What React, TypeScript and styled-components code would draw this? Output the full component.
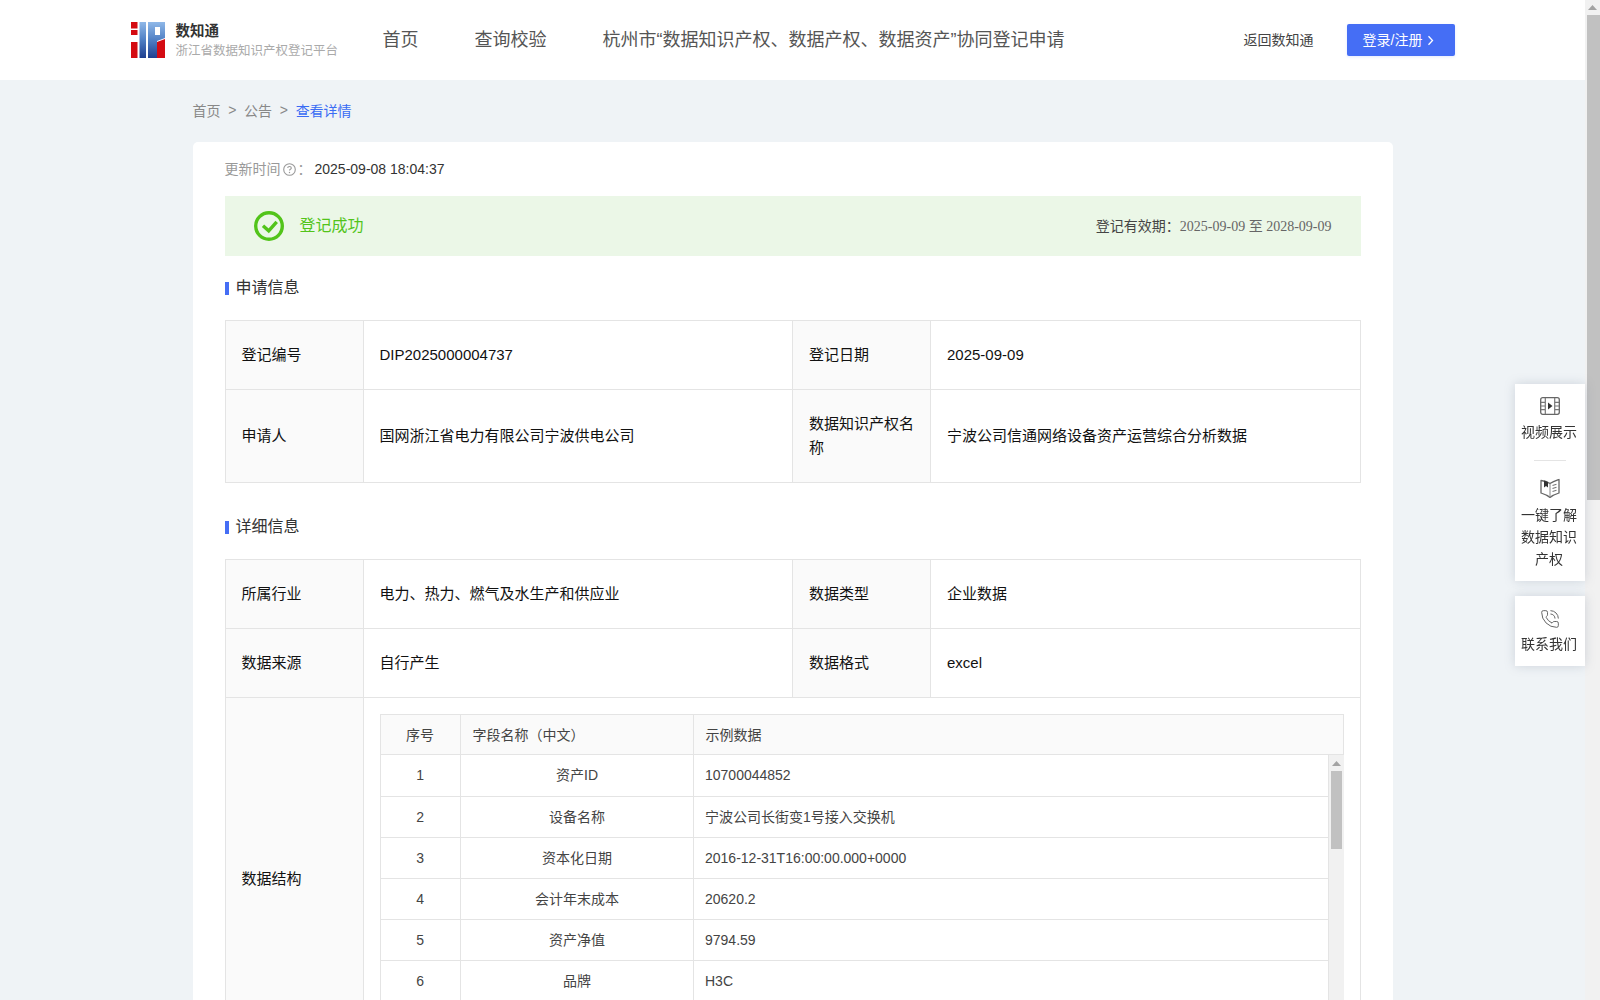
import styled, { createGlobalStyle } from "styled-components";
import { PhoneCall } from "lucide-react";

const GlobalStyle = createGlobalStyle`
  * {
    box-sizing: border-box;
  }
  html, body {
    margin: 0;
    padding: 0;
    height: 100%;
    overflow: hidden;
  }
  body {
    font-family: "Liberation Sans", "Noto Sans CJK SC", sans-serif;
    font-size: 14px;
    color: #333;
    background: #eff3f6;
  }
`;

//=============================== Page =========================================
const Viewport = styled.div`
  height: 100vh;
  display: flex;
  background: #eff3f6;
`;

const Page = styled.div`
  flex: 1;
  min-width: 0;
  overflow: hidden;
`;

//=============================== Scrollbar =========================================
const Track = styled.div`
  width: 15px;
  flex: none;
  background: #f1f1f1;
`;

const TrackButton = styled.div<{ $h: number }>`
  height: ${(p) => p.$h}px;
  display: flex;
  align-items: center;
  justify-content: center;
  svg {
    display: block;
  }
`;

const Thumb = styled.div<{ $h: number; $right: number }>`
  height: ${(p) => p.$h}px;
  margin-left: 2px;
  margin-right: ${(p) => p.$right}px;
  background: #c1c1c1;
`;

function ScrollBar({ thumb, right, button }: { thumb: number; right: number; button: number }) {
  return (
    <Track>
      <TrackButton $h={button}>
        <svg width="9" height="5" viewBox="0 0 9 5">
          <path d="M4.500 0L9 5H0z" fill="#a3a3a3" />
        </svg>
      </TrackButton>
      <Thumb $h={thumb} $right={right} />
    </Track>
  );
}

//=============================== Header =========================================
const Header = styled.header`
  height: 80px;
  background: #fff;
`;

const HeaderInner = styled.div`
  width: 1324px;
  height: 100%;
  margin: 0 auto;
  display: flex;
  align-items: center;
`;

const LogoBox = styled.div`
  display: flex;
  align-items: center;
  width: 252px;
`;

const LogoText = styled.div`
  margin-left: 11px;
  display: flex;
  flex-direction: column;
`;

const LogoTitle = styled.div`
  font-size: 14.5px;
  font-weight: 700;
  line-height: 20px;
  color: #333;
`;

const LogoSub = styled.div`
  font-size: 12.5px;
  line-height: 18px;
  margin-top: 1px;
  color: #aaa;
  white-space: nowrap;
`;

const Nav = styled.nav`
  display: flex;
  gap: 56px;
  flex: 1;
`;

const NavItem = styled.a`
  font-size: 18px;
  color: #555;
  margin-top: -4px;
  white-space: nowrap;
`;

const BackLink = styled.a`
  font-size: 14px;
  color: #444;
  margin-right: 33px;
  padding-bottom: 3px;
`;

const LoginButton = styled.button`
  width: 108px;
  height: 32px;
  padding: 0 4px 3px 0;
  border: none;
  border-radius: 2px;
  background: #456ef5;
  color: #fff;
  font: inherit;
  font-size: 14px;
  display: flex;
  align-items: center;
  justify-content: center;
  gap: 5px;
  box-shadow: 0 1px 3px rgba(69, 110, 245, 0.15);
  svg {
    display: block;
    margin-top: 3px;
  }
`;

//=============================== Content =========================================
const Main = styled.main`
  width: 1200px;
  margin: 0 auto;
`;

const Crumbs = styled.div`
  display: flex;
  align-items: center;
  height: 20px;
  margin-top: 20px;
  margin-bottom: 22px;
  font-size: 14px;
  color: #888;
`;

const CrumbSep = styled.span`
  margin: 0 7.7px;
`;

const CrumbActive = styled.span`
  color: #3a6cf4;
`;

const Card = styled.section`
  background: #fff;
  border-radius: 5px;
  padding: 16px 32px 32px;
`;

const Meta = styled.div`
  display: flex;
  align-items: center;
  height: 22px;
  margin-bottom: 16px;
  color: #999;
  svg {
    margin: 0 2px;
  }
`;

const MetaLabel = styled.span`
  padding-bottom: 3px;
`;

const MetaValue = styled.span`
  color: #333;
  margin-left: 3px;
`;

const Status = styled.div`
  display: flex;
  align-items: center;
  height: 60px;
  padding: 0 29px;
  background: #ebf7e7;
`;

const StatusText = styled.span`
  margin-left: 16px;
  padding-bottom: 4px;
  font-size: 16px;
  color: #52c41a;
  flex: 1;
`;

const Validity = styled.span`
  padding-bottom: 3px;
  font-size: 14px;
  color: #444;
`;

const ValidityDate = styled.span`
  font-family: "Liberation Serif", "Noto Sans CJK SC", serif;
  color: #666;
`;

const SectionTitle = styled.h3<{ $top: number; $bottom: number }>`
  display: flex;
  align-items: center;
  height: 24px;
  margin: ${(p) => p.$top}px 0 ${(p) => p.$bottom}px;
  font-size: 16px;
  font-weight: 400;
  line-height: 24px;
  color: #333;
  &::before {
    content: "";
    width: 4px;
    height: 13px;
    margin: 1px 7px 0 0;
    background: #456ef5;
  }
`;

const InfoTable = styled.table`
  width: 1135px;
  border-collapse: collapse;
  table-layout: fixed;
  font-size: 15px;
  color: #111;
`;

const LabelCell = styled.th`
  width: 138px;
  padding: 0 16px;
  background: #fafafa;
  border: 1px solid #e4e4e4;
  font-weight: 400;
  text-align: left;
  line-height: 24px;
`;

const ValueCell = styled.td`
  width: 429.5px;
  padding: 0 16px;
  border: 1px solid #e4e4e4;
  line-height: 24px;
`;

const NestedCell = styled(ValueCell)`
  padding: 16px;
`;

const Row = styled.tr<{ $h: number }>`
  height: ${(p) => p.$h}px;
`;

//=============================== Field table =========================================
const FieldHeadTable = styled.table`
  width: 100%;
  border-collapse: collapse;
  table-layout: fixed;
  font-size: 14px;
  color: #444;
`;

const FieldHead = styled.th<{ $w?: number; $center?: boolean }>`
  ${(p) => (p.$w ? `width: ${p.$w}px;` : "")}
  height: 40px;
  padding: 0 12px;
  background: #fafafa;
  border: 1px solid #e4e4e4;
  font-weight: 400;
  text-align: ${(p) => (p.$center ? "center" : "left")};
`;

const FieldBody = styled.div`
  height: 289px;
  display: flex;
  overflow: hidden;
  border-left: 1px solid #e4e4e4;
`;

const FieldRows = styled.div`
  flex: 1;
  min-width: 0;
  border-right: 1px solid #e4e4e4;
`;

const FieldBodyTable = styled.table`
  width: 100%;
  border-collapse: collapse;
  table-layout: fixed;
  font-size: 14px;
  color: #444;
`;

const FieldCell = styled.td<{ $w?: number; $center?: boolean }>`
  ${(p) => (p.$w ? `width: ${p.$w}px;` : "")}
  height: 41px;
  padding: 0 12px;
  border-bottom: 1px solid #e4e4e4;
  border-right: 1px solid #e4e4e4;
  text-align: ${(p) => (p.$center ? "center" : "left")};
  &:last-child {
    padding-left: 11px;
    border-right: none;
  }
`;

//=============================== Side tools =========================================
const SideTools = styled.aside`
  position: fixed;
  top: 384px;
  right: 15px;
  width: 70px;
  display: flex;
  flex-direction: column;
  gap: 15px;
`;

const SidePanel = styled.div<{ $bottom: number; $iconGap: number }>`
  background: #fff;
  padding: 13px 8px ${(p) => p.$bottom}px 6px;
  box-shadow: 0 0 10px rgba(120, 130, 150, 0.28);
  display: flex;
  flex-direction: column;
  align-items: center;
  text-align: center;
  font-size: 14px;
  line-height: 22px;
  color: #333;
  svg {
    display: block;
    margin-left: 2px;
    margin-bottom: ${(p) => p.$iconGap}px;
  }
`;

const SideDivider = styled.div`
  width: 32px;
  height: 1px;
  flex: none;
  margin: 17px 0 17px 2px;
  background: #e4e4e4;
`;

function LogoMark() {
  return (
    <svg width="34" height="36" viewBox="0 0 34 36">
      <defs>
        <linearGradient id="logoBlue" x1="0" y1="0" x2="0" y2="1">
          <stop offset="0" stopColor="#8fb8e8" />
          <stop offset="0.5" stopColor="#4f7fc4" />
          <stop offset="1" stopColor="#1f3f8f" />
        </linearGradient>
      </defs>
      <path d="M0 0h6.500v6.500H0zM0 8h6.500v5H0zM0 20h6.500v16H0z" fill="#d40b12" />
      <path d="M8.500 0h6.500v36H8.500z" fill="url(#logoBlue)" />
      <path
        d="M17 0h17v16l-8 3v17h-9z M24 5v8h5V5z"
        fill="url(#logoBlue)"
        fillRule="evenodd"
      />
      <path d="M26 20l8-3v19h-8z" fill="#d40b12" />
    </svg>
  );
}

function VideoIcon() {
  return (
    <svg width="20" height="18" viewBox="0 0 20 18" fill="none">
      <rect x="0.7" y="0.7" width="18.6" height="16.6" rx="2" stroke="#666" strokeWidth="1.3" />
      <path d="M5.300 1v16M14.700 1v16M1 5.300h4.300M1 9h4.300M1 12.700h4.300M14.700 5.300H19M14.700 9H19M14.700 12.700H19" stroke="#777" strokeWidth="1.2" />
      <path d="M8 5.500L12.500 9 8 12.500z" fill="#333" />
    </svg>
  );
}

function BookIcon() {
  return (
    <svg width="20" height="20" viewBox="0 0 20 20" fill="none">
      <path
        d="M1 2.500c3 .2 6 1 9 3 3-2 5.500-2.800 9-4v13.500c-3.500 1-6.500 2.300-9 4.500-2.500-2.200-5.500-3.500-9-4.500z"
        stroke="#666"
        strokeWidth="1.3"
        strokeLinejoin="round"
      />
      <path d="M10 5.500v13.500" stroke="#888" strokeWidth="1" />
      <path d="M4 2.500v7l2-1.500 2 1.500V4z" fill="#333" />
      <path d="M12.500 7.500l4-1.300M12.500 10.500l4-1.300M12.500 13.500l4-1.300" stroke="#777" strokeWidth="1.100" />
    </svg>
  );
}

function CheckRing() {
  return (
    <svg width="30" height="30" viewBox="0 0 30 30" fill="none">
      <circle cx="15" cy="15" r="13.300" stroke="#52c41a" strokeWidth="3.400" />
      <path d="M9 14.800l5.700 5 8-9" stroke="#52c41a" strokeWidth="3.400" />
    </svg>
  );
}

function HelpIcon() {
  return (
    <svg width="13" height="13" viewBox="0 0 13 13" fill="none">
      <circle cx="6.500" cy="6.500" r="5.800" stroke="#999" strokeWidth="1.100" />
      <path d="M4.700 5.100c0-1 .8-1.600 1.800-1.600s1.800.6 1.800 1.500c0 1.300-1.800 1.300-1.800 2.500" stroke="#999" strokeWidth="1.100" />
      <circle cx="6.500" cy="9.500" r=".7" fill="#999" />
    </svg>
  );
}

const fields = [
  ["1", "资产ID", "10700044852"],
  ["2", "设备名称", "宁波公司长街变1号接入交换机"],
  ["3", "资本化日期", "2016-12-31T16:00:00.000+0000"],
  ["4", "会计年末成本", "20620.2"],
  ["5", "资产净值", "9794.59"],
  ["6", "品牌", "H3C"],
];

function App() {
  return (
    <>
      <GlobalStyle />
      <Viewport>
        <Page>
          <Header>
            <HeaderInner>
              <LogoBox>
                <LogoMark />
                <LogoText>
                  <LogoTitle>数知通</LogoTitle>
                  <LogoSub>浙江省数据知识产权登记平台</LogoSub>
                </LogoText>
              </LogoBox>
              <Nav>
                <NavItem>首页</NavItem>
                <NavItem>查询校验</NavItem>
                <NavItem>杭州市“数据知识产权、数据产权、数据资产”协同登记申请</NavItem>
              </Nav>
              <BackLink>返回数知通</BackLink>
              <LoginButton>
                登录/注册
                <svg width="7" height="11" viewBox="0 0 7 11" fill="none">
                  <path d="M1.500 1.200L5.500 5.500l-4 4.300" stroke="#fff" strokeWidth="1.300" />
                </svg>
              </LoginButton>
            </HeaderInner>
          </Header>

          <Main>
            <Crumbs>
              首页
              <CrumbSep>&gt;</CrumbSep>
              公告
              <CrumbSep>&gt;</CrumbSep>
              <CrumbActive>查看详情</CrumbActive>
            </Crumbs>

            <Card>
              <Meta>
                <MetaLabel>更新时间</MetaLabel>
                <HelpIcon />
                <MetaLabel>：</MetaLabel>
                <MetaValue>2025-09-08 18:04:37</MetaValue>
              </Meta>

              <Status>
                <CheckRing />
                <StatusText>登记成功</StatusText>
                <Validity>
                  登记有效期：
                  <ValidityDate>2025-09-09 至 2028-09-09</ValidityDate>
                </Validity>
              </Status>

              <SectionTitle $top={20} $bottom={20}>申请信息</SectionTitle>
              <InfoTable>
                <tbody>
                  <Row $h={69}>
                    <LabelCell>登记编号</LabelCell>
                    <ValueCell>DIP2025000004737</ValueCell>
                    <LabelCell>登记日期</LabelCell>
                    <ValueCell>2025-09-09</ValueCell>
                  </Row>
                  <Row $h={93}>
                    <LabelCell>申请人</LabelCell>
                    <ValueCell>国网浙江省电力有限公司宁波供电公司</ValueCell>
                    <LabelCell>数据知识产权名称</LabelCell>
                    <ValueCell>宁波公司信通网络设备资产运营综合分析数据</ValueCell>
                  </Row>
                </tbody>
              </InfoTable>

              <SectionTitle $top={32} $bottom={20}>详细信息</SectionTitle>
              <InfoTable>
                <tbody>
                  <Row $h={69}>
                    <LabelCell>所属行业</LabelCell>
                    <ValueCell>电力、热力、燃气及水生产和供应业</ValueCell>
                    <LabelCell>数据类型</LabelCell>
                    <ValueCell>企业数据</ValueCell>
                  </Row>
                  <Row $h={69}>
                    <LabelCell>数据来源</LabelCell>
                    <ValueCell>自行产生</ValueCell>
                    <LabelCell>数据格式</LabelCell>
                    <ValueCell>excel</ValueCell>
                  </Row>
                  <tr>
                    <LabelCell>数据结构</LabelCell>
                    <NestedCell colSpan={3}>
                      <FieldHeadTable>
                        <thead>
                          <tr>
                            <FieldHead $w={80} $center>序号</FieldHead>
                            <FieldHead $w={233}>字段名称（中文）</FieldHead>
                            <FieldHead>示例数据</FieldHead>
                          </tr>
                        </thead>
                      </FieldHeadTable>
                      <FieldBody>
                        <FieldRows>
                          <FieldBodyTable>
                            <tbody>
                              {fields.map((f) => (
                                <tr key={f[0]}>
                                  <FieldCell $w={80} $center>{f[0]}</FieldCell>
                                  <FieldCell $w={233} $center>{f[1]}</FieldCell>
                                  <FieldCell>{f[2]}</FieldCell>
                                </tr>
                              ))}
                            </tbody>
                          </FieldBodyTable>
                        </FieldRows>
                        <ScrollBar thumb={78} right={2} button={16} />
                      </FieldBody>
                    </NestedCell>
                  </tr>
                </tbody>
              </InfoTable>
            </Card>
          </Main>
        </Page>
        <ScrollBar thumb={485} right={0} button={15} />
      </Viewport>

      <SideTools>
        <SidePanel $bottom={11} $iconGap={6}>
          <VideoIcon />
          视频展示
          <SideDivider />
          <BookIcon />
          一键了解数据知识产权
        </SidePanel>
        <SidePanel $bottom={11} $iconGap={4}>
          <PhoneCall size={20} strokeWidth={1.2} color="#666" />
          联系我们
        </SidePanel>
      </SideTools>
    </>
  );
}

export default App;
